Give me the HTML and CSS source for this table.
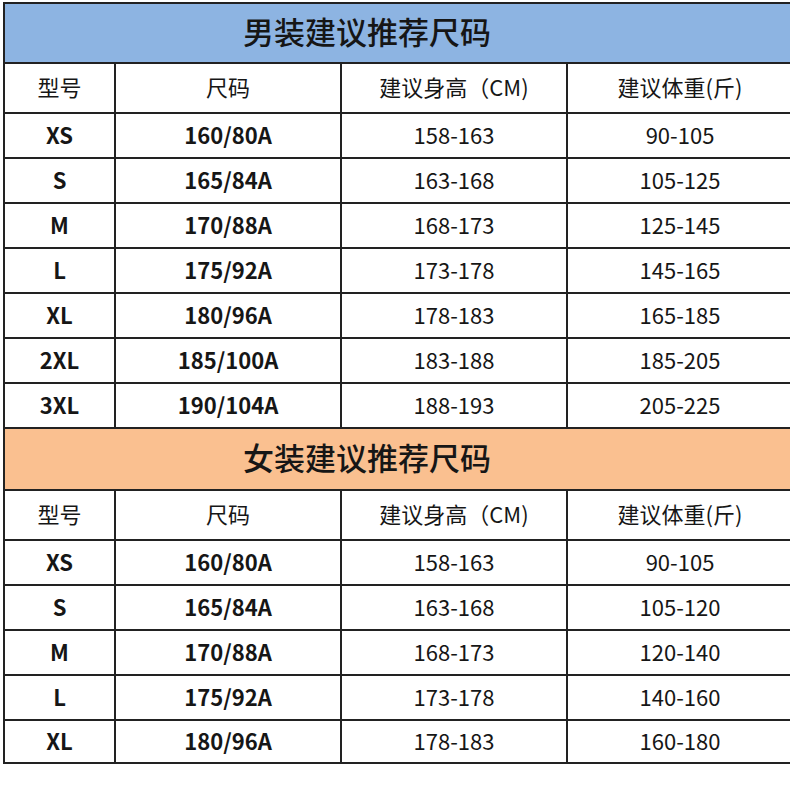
FILE: index.html
```html
<!DOCTYPE html>
<html lang="zh-CN">
<head>
<meta charset="utf-8">
<title>建议推荐尺码</title>
<link rel="stylesheet" href="styles.css">
</head>
<body>
<div class="sheet">
  <div class="row title men"><span>男装建议推荐尺码</span></div>
  <div class="row head">
    <div class="cell">型号</div><div class="cell">尺码</div><div class="cell">建议身高（CM)</div><div class="cell">建议体重(斤)</div>
  </div>
  <div class="row data"><div class="cell b">XS</div><div class="cell b">160/80A</div><div class="cell">158-163</div><div class="cell">90-105</div></div>
  <div class="row data"><div class="cell b">S</div><div class="cell b">165/84A</div><div class="cell">163-168</div><div class="cell">105-125</div></div>
  <div class="row data"><div class="cell b">M</div><div class="cell b">170/88A</div><div class="cell">168-173</div><div class="cell">125-145</div></div>
  <div class="row data"><div class="cell b">L</div><div class="cell b">175/92A</div><div class="cell">173-178</div><div class="cell">145-165</div></div>
  <div class="row data"><div class="cell b">XL</div><div class="cell b">180/96A</div><div class="cell">178-183</div><div class="cell">165-185</div></div>
  <div class="row data"><div class="cell b">2XL</div><div class="cell b">185/100A</div><div class="cell">183-188</div><div class="cell">185-205</div></div>
  <div class="row data"><div class="cell b">3XL</div><div class="cell b">190/104A</div><div class="cell">188-193</div><div class="cell">205-225</div></div>
  <div class="row title women"><span>女装建议推荐尺码</span></div>
  <div class="row head">
    <div class="cell">型号</div><div class="cell">尺码</div><div class="cell">建议身高（CM)</div><div class="cell">建议体重(斤)</div>
  </div>
  <div class="row data"><div class="cell b">XS</div><div class="cell b">160/80A</div><div class="cell">158-163</div><div class="cell">90-105</div></div>
  <div class="row data"><div class="cell b">S</div><div class="cell b">165/84A</div><div class="cell">163-168</div><div class="cell">105-120</div></div>
  <div class="row data"><div class="cell b">M</div><div class="cell b">170/88A</div><div class="cell">168-173</div><div class="cell">120-140</div></div>
  <div class="row data"><div class="cell b">L</div><div class="cell b">175/92A</div><div class="cell">173-178</div><div class="cell">140-160</div></div>
  <div class="row data last"><div class="cell b">XL</div><div class="cell b">180/96A</div><div class="cell">178-183</div><div class="cell">160-180</div></div>
</div>
</body>
</html>
```

FILE: styles.css
```css
html, body {
  margin: 0;
  padding: 0;
  background: #ffffff;
  overflow: hidden;
}
body {
  font-family: "Noto Sans CJK SC", "Noto Sans", sans-serif;
  color: #161616;
}
.sheet {
  margin: 2px 0 0 3px;
  width: 791px;
  border-top: 2px solid #222;
  border-left: 2px solid #222;
}
.row {
  display: grid;
  grid-template-columns: 111px 226px 226px 226px;
  border-bottom: 2px solid #222;
}
.cell {
  border-right: 2px solid #222;
  display: flex;
  align-items: center;
  justify-content: center;
  font-size: 22px;
  box-sizing: border-box;
  padding-bottom: 4px;
}
.b { font-weight: 700; }
.title {
  display: flex;
  align-items: center;
  height: 58px;
  padding-left: 238px;
  padding-bottom: 6px;
  box-sizing: content-box;
  font-size: 31px;
  font-weight: 500;
}
.title.men { background: #8db4e2; height: 52px; }
.title.women { background: #fac090; height: 54px; }
.head .cell { height: 48px; }
.data .cell { height: 43px; }
.data.last .cell { height: 41px; }
```
